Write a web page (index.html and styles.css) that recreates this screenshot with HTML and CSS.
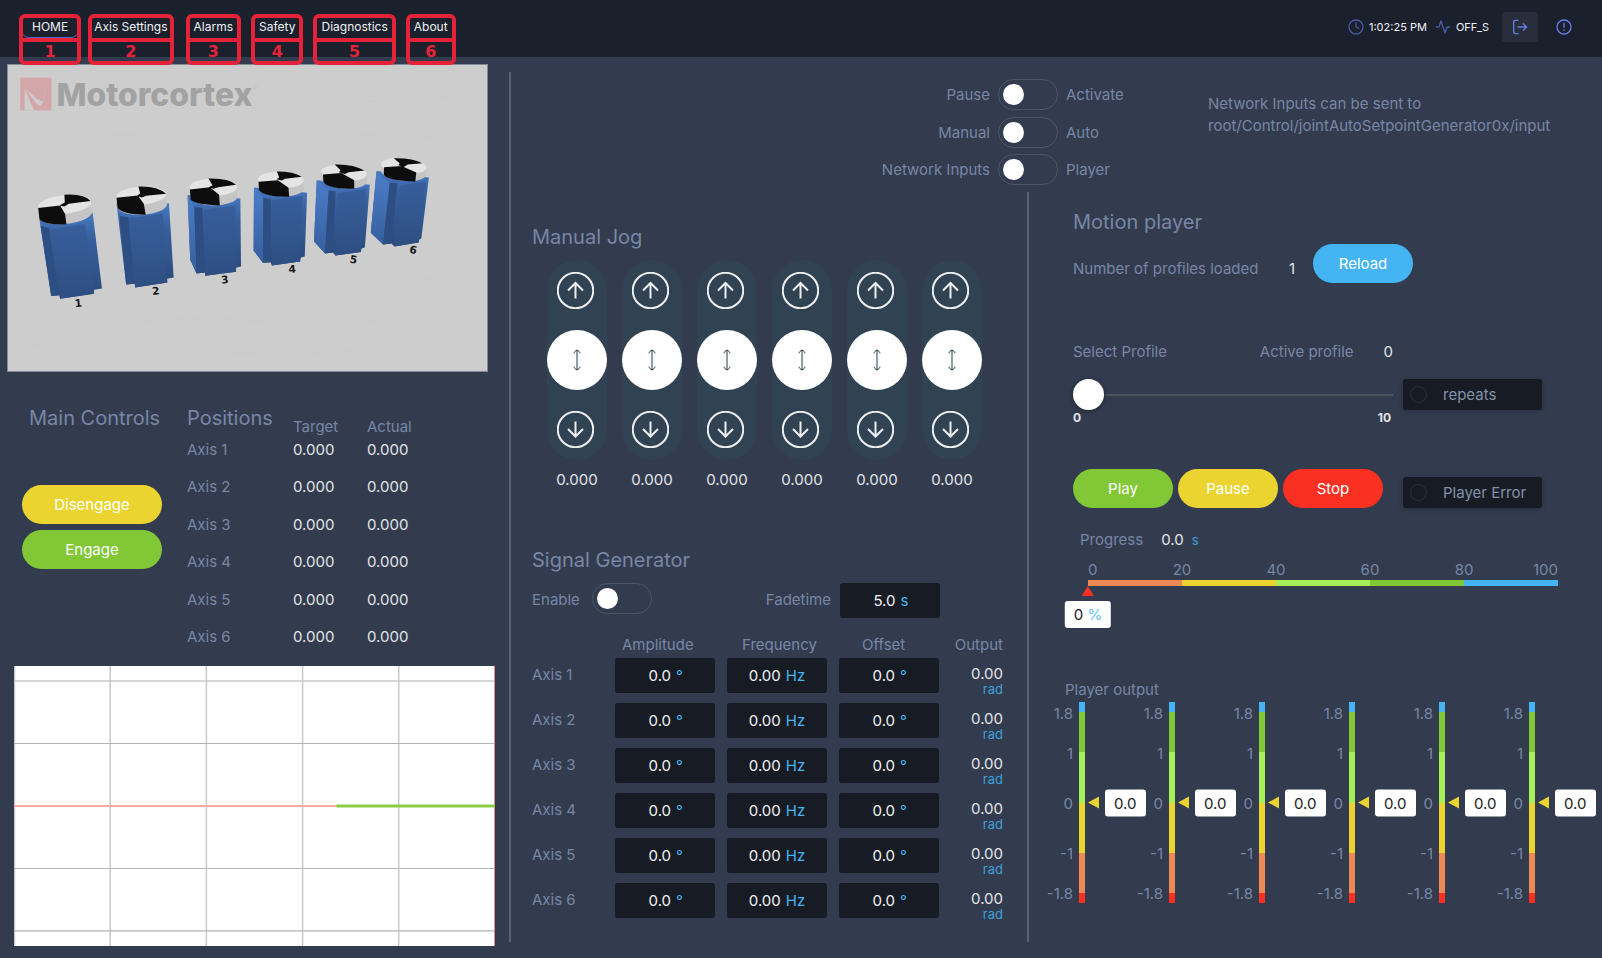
FILE: index.html
```html
<!DOCTYPE html>
<html lang="en">
<head>
<meta charset="utf-8">
<meta name="viewport" content="width=device-width, initial-scale=1">
<title>Motorcortex</title>
<link rel="stylesheet" href="styles.css">
</head>
<body>
<svg class="sprite" aria-hidden="true">
  <symbol id="arrow-up" viewBox="0 0 37 37"><circle cx="18.500" cy="18.500" r="17.700"/><path d="M18.500 26.500V11.500M11 18.500l7.500-7.500 7.500 7.500"/></symbol>
  <symbol id="arrow-down" viewBox="0 0 37 37"><circle cx="18.500" cy="18.500" r="17.700"/><path d="M18.500 10.500v15M11 18l7.500 7.500 7.500-7.500"/></symbol>
  <symbol id="arrow-both" viewBox="0 0 10 24"><path d="M5 2v20M2 5.300c.3-1.600 1.500-2.600 3-3.300 1.500.7 2.700 1.700 3 3.300M2 18.700c.3 1.600 1.500 2.600 3 3.300 1.500-.7 2.700-1.700 3-3.300"/></symbol>
</svg>

<header class="topbar">
  <nav>
    <ul class="tabs">
      <li class="tab tab-active"><a href="#home">HOME</a><span class="callout callout-wide"><b>1</b></span></li>
      <li class="tab"><a href="#axis">Axis Settings</a><span class="callout callout-tight"><b>2</b></span></li>
      <li class="tab"><a href="#alarms">Alarms</a><span class="callout"><b>3</b></span></li>
      <li class="tab"><a href="#safety">Safety</a><span class="callout"><b>4</b></span></li>
      <li class="tab"><a href="#diagnostics">Diagnostics</a><span class="callout"><b>5</b></span></li>
      <li class="tab"><a href="#about">About</a><span class="callout"><b>6</b></span></li>
    </ul>
  </nav>
  <div class="status">
    <svg class="icon icon-dim" viewBox="0 0 24 24"><circle cx="12" cy="12" r="10.500"/><path d="M12 6v6l4 2"/></svg>
    <span class="status-text">1:02:25 PM</span>
    <svg class="icon icon-dim" viewBox="0 0 24 24"><path d="M22 12h-4l-3 9L9 3l-3 9H2"/></svg>
    <span class="status-text">OFF_S</span>
    <button class="icon-button icon-button-filled" aria-label="Log out"><svg class="icon" viewBox="0 0 24 24"><path d="M9 2H5a2.500 2.500 0 0 0-2.500 2.500v15A2.500 2.500 0 0 0 5 22h4M17 17l5-5-5-5M22 12H9"/></svg></button>
    <button class="icon-button" aria-label="Information"><svg class="icon" viewBox="0 0 24 24"><circle cx="12" cy="12" r="10.500"/><path d="M12 6.500v6M12 16.500v.6"/></svg></button>
  </div>
</header>

<main class="layout">
  <section class="left">
    <svg class="scene" viewBox="20 13 1443 922" role="img" aria-label="Six motors">
      <defs>
        <linearGradient id="base" x1="0" y1="0" x2="0" y2="1"><stop offset="0" stop-color="#4679c3"/><stop offset=".3" stop-color="#375f9e"/><stop offset="1" stop-color="#2b4a7b"/></linearGradient>
        <linearGradient id="front" x1="0" y1="0" x2="0" y2="1"><stop offset="0" stop-color="#375f9d"/><stop offset=".5" stop-color="#33578f"/><stop offset="1" stop-color="#2e4e81"/></linearGradient>
        <linearGradient id="lit" x1="0" y1="0" x2="0" y2="1"><stop offset="0" stop-color="#4a7dc8"/><stop offset="1" stop-color="#385f9f"/></linearGradient>
      </defs>
      <rect x="20" y="13" width="1443" height="922" fill="#cdcdcd"/>
      <g fill="none" stroke="#cacaca" stroke-width="2">
        <path d="M60 240q200-20 380-14M900 110q220 30 500-8M300 800q300-40 500-10t600-50M80 860q240-30 420-8M1100 650q160 24 330-6M700 880q300 20 680-50M1000 230q160-16 400 10"/>
      </g>
      <rect x="57" y="51" width="94" height="99" fill="#d3a7aa"/>
      <path fill="#cdcdcd" d="M70 150V86l29 64zM70 82l38 50 10 4 6-7 14-68-14 62-18-8z"/>
      <text class="brand" x="166" y="137">Motorcortex</text>
      <circle cx="767" cy="81" r="4" fill="none" stroke="#b8b8b8"/>

      <path fill="url(#base)" d="M115 480l160-22 28 228-24 4v12l-102 15-2-10-25 2z"/>
      <path fill="#2d4e83" d="M118 497l26 8 30 202-24 2z"/>
      <path fill="url(#front)" d="M144 508l108-16 27 210-102 15z"/>
      <ellipse cx="192" cy="464" rx="80" ry="28" fill="#c5c5c5" transform="rotate(-5 192 464)"/>
      <path fill="#c5c5c5" d="M111 440h159l2 22H115z"/>
      <ellipse cx="191" cy="433" rx="80" ry="28" fill="#e4e4e4" transform="rotate(-5 191 433)"/>
      <path fill="#0d0d0e" d="M111 444l66-8 15 26 4 31q-62 2-81-14zM190 404q60-4 79 19l-66 8-13 8-15-3 16-9z"/>

      <path fill="url(#base)" d="M347 430h158l14 223-20 4 1 11-97 15-1-11-26 2z"/>
      <path fill="#2d4e83" d="M356 468l27 4 19 200-26 2z"/>
      <path fill="url(#front)" d="M383 475l103-15 14 208-97 15z"/>
      <ellipse cx="424" cy="436" rx="75" ry="28" fill="#c5c5c5" transform="rotate(-3 424 436)"/>
      <path fill="#c5c5c5" d="M347 408h150l1 30H350z"/>
      <ellipse cx="422" cy="406" rx="75" ry="27" fill="#e4e4e4" transform="rotate(-3 422 406)"/>
      <path fill="#0d0d0e" d="M347 413l64-7 18 25 6 33q-68 0-85-20zM413 379q58-2 83 22l-60 6-13 5-15-4 10-9z"/>

      <path fill="url(#base)" d="M561 405l159 10 2 205-15 4v12l-93 12-1-10-25 3-19-41z"/>
      <path fill="url(#lit)" d="M561 407l20 33 7 201-19-41z"/>
      <path fill="#2d4e83" d="M581 441l25 3 7 194-25 3z"/>
      <path fill="url(#front)" d="M610 449l95-13 2 200-93 12z"/>
      <ellipse cx="640" cy="409" rx="71" ry="27" fill="#c5c5c5"/>
      <path fill="#c5c5c5" d="M568 382h142v28H570z"/>
      <ellipse cx="639" cy="381" rx="71" ry="26" fill="#e4e4e4"/>
      <path fill="#0d0d0e" d="M568 388l60-7 28 23 2 32q-70-2-88-17zM624 355q60-2 83 19l-54 7-13 5-16-5 12-5z"/>

      <path fill="url(#base)" d="M761 382l160 16-7 192-12 3-2 12-85 12-4-10-23 2-28-37z"/>
      <path fill="url(#lit)" d="M761 382l28 31-1 196-28-37z"/>
      <path fill="#2d4e83" d="M789 413l23 4-1 190-23 2z"/>
      <path fill="url(#front)" d="M814 421l94-14-8 198-85 12z"/>
      <ellipse cx="843" cy="384" rx="68" ry="25" fill="#c5c5c5" transform="rotate(2 843 384)"/>
      <path fill="#c5c5c5" d="M773 358l138 2-1 27-136-4z"/>
      <ellipse cx="842" cy="359" rx="69" ry="25" fill="#e4e4e4" transform="rotate(2 842 359)"/>
      <path fill="#0d0d0e" d="M775 365l58-5 32 23 2 27q-74 0-91-20zM830 334q52 0 75 16l-50 6-11 5-15-4 8-5z"/>

      <path fill="url(#base)" d="M950 360l160 14-15 189-10 3-2 10-77 11-7-9-24 3-33-36z"/>
      <path fill="url(#lit)" d="M950 360l36 31-11 190-33-36z"/>
      <path fill="#2d4e83" d="M986 391l21 3-8 184-24 3z"/>
      <path fill="url(#front)" d="M1014 399l85-13-16 190-77 11z"/>
      <ellipse cx="1032" cy="361" rx="68" ry="24" fill="#c5c5c5" transform="rotate(4 1032 361)"/>
      <path fill="#c5c5c5" d="M963 334l138 8-2 25-134-8z"/>
      <ellipse cx="1032" cy="338" rx="69" ry="24" fill="#e4e4e4" transform="rotate(4 1032 338)"/>
      <path fill="#0d0d0e" d="M969 343l55-5 39 22v26q-78 0-93-20zM1004 313q56-2 90 18l-48 5-11 5-18-5 5-6z"/>

      <path fill="url(#base)" d="M1130 332l158 20-23 184-6 3-2 9-73 12-9-9-25 3-37-36z"/>
      <path fill="url(#lit)" d="M1130 337l40 31-20 186-37-36z"/>
      <path fill="#2d4e83" d="M1170 368l23 1-18 182-25 3z"/>
      <path fill="url(#front)" d="M1200 376l80-12-23 184-73 12z"/>
      <ellipse cx="1212" cy="338" rx="68" ry="24" fill="#c5c5c5" transform="rotate(5 1212 338)"/>
      <path fill="#c5c5c5" d="M1144 312l137 10-3 24-134-14z"/>
      <ellipse cx="1212" cy="317" rx="69" ry="23" fill="#e4e4e4" transform="rotate(5 1212 317)"/>
      <path fill="#0d0d0e" d="M1153 321l52-4 45 20-3 27q-82-2-95-20zM1182 294q54-2 86 15l-44 4-11 7-17-5 4-6z"/>

      <g class="marks">
        <text x="232" y="742" transform="rotate(-6 232 732)">1</text>
        <text x="465" y="705" transform="rotate(-6 465 694)">2</text>
        <text x="673" y="671" transform="rotate(-6 673 660)">3</text>
        <text x="876" y="639" transform="rotate(-4 876 628)">4</text>
        <text x="1061" y="610" transform="rotate(10 1061 599)">5</text>
        <text x="1241" y="581" transform="rotate(14 1241 570)">6</text>
      </g>
    </svg>

    <div class="controls">
      <div class="engage">
        <h2>Main Controls</h2>
        <button class="pill yellow">Disengage</button>
        <button class="pill green">Engage</button>
      </div>
      <table class="positions">
        <thead><tr><th><h2>Positions</h2></th><th>Target</th><th>Actual</th></tr></thead>
        <tbody>
          <tr><th>Axis 1</th><td>0.000</td><td>0.000</td></tr>
          <tr><th>Axis 2</th><td>0.000</td><td>0.000</td></tr>
          <tr><th>Axis 3</th><td>0.000</td><td>0.000</td></tr>
          <tr><th>Axis 4</th><td>0.000</td><td>0.000</td></tr>
          <tr><th>Axis 5</th><td>0.000</td><td>0.000</td></tr>
          <tr><th>Axis 6</th><td>0.000</td><td>0.000</td></tr>
        </tbody>
      </table>
    </div>

    <svg class="plot" viewBox="0 0 481 280" role="img" aria-label="Position plot">
      <rect width="481" height="280" fill="#fff"/>
      <g fill="none" stroke-width="1.500">
        <path stroke="#c9c9c9" d="M.5 0v280M96.200 0v280M192.400 0v280M288.600 0v280M384.700 0v280M0 15h481"/>
        <path stroke="#b4b4b4" stroke-width="1.200" d="M0 77.500h481M0 202.500h481M0 264.800h481"/>
        <path stroke="#ffaaa8" stroke-width="2" d="M0 140h481"/>
        <path stroke="#e58a8c" stroke-width="1" d="M480.500 0v280"/>
        <path stroke="#8bcb45" stroke-width="3" d="M322.500 140H481"/>
      </g>
    </svg>
  </section>

  <div class="divider"></div>

  <section class="right">
    <div class="modes">
      <div class="switches">
        <label for="sw-activate">Pause</label><input id="sw-activate" class="switch" type="checkbox" role="switch"><label for="sw-activate">Activate</label>
        <label for="sw-auto">Manual</label><input id="sw-auto" class="switch" type="checkbox" role="switch"><label for="sw-auto">Auto</label>
        <label for="sw-player">Network Inputs</label><input id="sw-player" class="switch" type="checkbox" role="switch"><label for="sw-player">Player</label>
      </div>
      <p class="note">Network Inputs can be sent to<br>root/Control/jointAutoSetpointGenerator0x/input</p>
    </div>

    <section class="middle">
      <h2>Manual Jog</h2>
      <div class="jogs">
        <div class="jog"><div class="jog-track"><button class="step" aria-label="Jog axis 1 up"><svg><use href="#arrow-up"/></svg></button><button class="knob" aria-label="Axis 1"><svg><use href="#arrow-both"/></svg></button><button class="step" aria-label="Jog axis 1 down"><svg><use href="#arrow-down"/></svg></button></div><output>0.000</output></div>
        <div class="jog"><div class="jog-track"><button class="step" aria-label="Jog axis 2 up"><svg><use href="#arrow-up"/></svg></button><button class="knob" aria-label="Axis 2"><svg><use href="#arrow-both"/></svg></button><button class="step" aria-label="Jog axis 2 down"><svg><use href="#arrow-down"/></svg></button></div><output>0.000</output></div>
        <div class="jog"><div class="jog-track"><button class="step" aria-label="Jog axis 3 up"><svg><use href="#arrow-up"/></svg></button><button class="knob" aria-label="Axis 3"><svg><use href="#arrow-both"/></svg></button><button class="step" aria-label="Jog axis 3 down"><svg><use href="#arrow-down"/></svg></button></div><output>0.000</output></div>
        <div class="jog"><div class="jog-track"><button class="step" aria-label="Jog axis 4 up"><svg><use href="#arrow-up"/></svg></button><button class="knob" aria-label="Axis 4"><svg><use href="#arrow-both"/></svg></button><button class="step" aria-label="Jog axis 4 down"><svg><use href="#arrow-down"/></svg></button></div><output>0.000</output></div>
        <div class="jog"><div class="jog-track"><button class="step" aria-label="Jog axis 5 up"><svg><use href="#arrow-up"/></svg></button><button class="knob" aria-label="Axis 5"><svg><use href="#arrow-both"/></svg></button><button class="step" aria-label="Jog axis 5 down"><svg><use href="#arrow-down"/></svg></button></div><output>0.000</output></div>
        <div class="jog"><div class="jog-track"><button class="step" aria-label="Jog axis 6 up"><svg><use href="#arrow-up"/></svg></button><button class="knob" aria-label="Axis 6"><svg><use href="#arrow-both"/></svg></button><button class="step" aria-label="Jog axis 6 down"><svg><use href="#arrow-down"/></svg></button></div><output>0.000</output></div>
      </div>

      <h2 class="generator-title">Signal Generator</h2>
      <div class="generator-head">
        <label for="sw-enable">Enable</label>
        <input id="sw-enable" class="switch" type="checkbox" role="switch">
        <label class="fade-label" for="fade">Fadetime</label>
        <span class="field"><input id="fade" value="5.0"><i>s</i></span>
      </div>
      <table class="generator">
        <colgroup><col class="c-axis"><col class="c-field"><col class="c-field"><col class="c-field"><col></colgroup>
        <thead><tr><th></th><th class="h-amp">Amplitude</th><th class="h-freq">Frequency</th><th class="h-off">Offset</th><th class="h-out">Output</th></tr></thead>
        <tbody>
          <tr><th>Axis 1</th><td><span class="field"><input aria-label="Axis 1 amplitude" value="0.0"><i>°</i></span></td><td><span class="field wide"><input aria-label="Axis 1 frequency" value="0.00"><i>Hz</i></span></td><td><span class="field"><input aria-label="Axis 1 offset" value="0.0"><i>°</i></span></td><td class="out">0.00<i>rad</i></td></tr>
          <tr><th>Axis 2</th><td><span class="field"><input aria-label="Axis 2 amplitude" value="0.0"><i>°</i></span></td><td><span class="field wide"><input aria-label="Axis 2 frequency" value="0.00"><i>Hz</i></span></td><td><span class="field"><input aria-label="Axis 2 offset" value="0.0"><i>°</i></span></td><td class="out">0.00<i>rad</i></td></tr>
          <tr><th>Axis 3</th><td><span class="field"><input aria-label="Axis 3 amplitude" value="0.0"><i>°</i></span></td><td><span class="field wide"><input aria-label="Axis 3 frequency" value="0.00"><i>Hz</i></span></td><td><span class="field"><input aria-label="Axis 3 offset" value="0.0"><i>°</i></span></td><td class="out">0.00<i>rad</i></td></tr>
          <tr><th>Axis 4</th><td><span class="field"><input aria-label="Axis 4 amplitude" value="0.0"><i>°</i></span></td><td><span class="field wide"><input aria-label="Axis 4 frequency" value="0.00"><i>Hz</i></span></td><td><span class="field"><input aria-label="Axis 4 offset" value="0.0"><i>°</i></span></td><td class="out">0.00<i>rad</i></td></tr>
          <tr><th>Axis 5</th><td><span class="field"><input aria-label="Axis 5 amplitude" value="0.0"><i>°</i></span></td><td><span class="field wide"><input aria-label="Axis 5 frequency" value="0.00"><i>Hz</i></span></td><td><span class="field"><input aria-label="Axis 5 offset" value="0.0"><i>°</i></span></td><td class="out">0.00<i>rad</i></td></tr>
          <tr><th>Axis 6</th><td><span class="field"><input aria-label="Axis 6 amplitude" value="0.0"><i>°</i></span></td><td><span class="field wide"><input aria-label="Axis 6 frequency" value="0.00"><i>Hz</i></span></td><td><span class="field"><input aria-label="Axis 6 offset" value="0.0"><i>°</i></span></td><td class="out">0.00<i>rad</i></td></tr>
        </tbody>
      </table>
    </section>

    <div class="divider divider-inner"></div>

    <section class="player">
      <div class="motion">
        <h2>Motion player</h2>
        <div class="profiles">
          <span class="low">Number of profiles loaded</span><output class="low">1</output>
          <button class="pill blue">Reload</button>
        </div>
        <div class="select-row"><label for="profile">Select Profile</label><span class="active-label">Active profile</span><output>0</output></div>
        <div class="pair">
          <div class="slider">
            <input id="profile" type="range" min="0" max="10" value="0">
            <div class="limits"><b>0</b><b>10</b></div>
          </div>
          <label class="lamp"><input type="radio" name="repeats">repeats</label>
        </div>
        <div class="pair transport">
          <div class="buttons"><button class="pill green">Play</button><button class="pill yellow">Pause</button><button class="pill red">Stop</button></div>
          <label class="lamp"><input type="radio" name="error">Player Error</label>
        </div>
        <div class="progress"><span>Progress</span><output>0.0</output><i>s</i></div>
        <div class="scale">
          <div class="scale-ticks"><span>0</span><span>20</span><span>40</span><span>60</span><span>80</span><span>100</span></div>
          <div class="scale-bar"><span class="s-orange"></span><span class="s-yellow"></span><span class="s-lime"></span><span class="s-green"></span><span class="s-blue"></span></div>
          <div class="pointer" style="left:0%"><span class="pointer-tip"></span><span class="badge">0 <i>%</i></span></div>
        </div>
      </div>

      <div class="outputs">
        <h3>Player output</h3>
        <div class="gauges">
          <div class="gauge"><div class="ticks"><span>1.8</span><span>1</span><span>0</span><span>-1</span><span>-1.8</span></div><div class="bar"></div><div class="marker" style="top:50%"><span class="marker-tip"></span><span class="badge">0.0</span></div></div>
          <div class="gauge"><div class="ticks"><span>1.8</span><span>1</span><span>0</span><span>-1</span><span>-1.8</span></div><div class="bar"></div><div class="marker" style="top:50%"><span class="marker-tip"></span><span class="badge">0.0</span></div></div>
          <div class="gauge"><div class="ticks"><span>1.8</span><span>1</span><span>0</span><span>-1</span><span>-1.8</span></div><div class="bar"></div><div class="marker" style="top:50%"><span class="marker-tip"></span><span class="badge">0.0</span></div></div>
          <div class="gauge"><div class="ticks"><span>1.8</span><span>1</span><span>0</span><span>-1</span><span>-1.8</span></div><div class="bar"></div><div class="marker" style="top:50%"><span class="marker-tip"></span><span class="badge">0.0</span></div></div>
          <div class="gauge"><div class="ticks"><span>1.8</span><span>1</span><span>0</span><span>-1</span><span>-1.8</span></div><div class="bar"></div><div class="marker" style="top:50%"><span class="marker-tip"></span><span class="badge">0.0</span></div></div>
          <div class="gauge"><div class="ticks"><span>1.8</span><span>1</span><span>0</span><span>-1</span><span>-1.8</span></div><div class="bar"></div><div class="marker" style="top:50%"><span class="marker-tip"></span><span class="badge">0.0</span></div></div>
        </div>
      </div>
    </section>
  </section>
</main>
</body>
</html>
```
FILE: styles.css
```css
:root {
  --bg: #323c4e;
  --bar: #1a202c;
  --field: #171c24;
  --label: #7886a6;
  --value: #e2e4e8;
  --line: #56637f;
  --unit: #3f9fd8;
  --red: #f93022;
  --orange: #ee8855;
  --yellow: #ecd430;
  --lime: #a6ef58;
  --green: #82c836;
  --blue: #44b4f2;
}

* { box-sizing: border-box; }

body {
  margin: 0;
  min-height: 100vh;
  display: flex;
  flex-direction: column;
  background: var(--bg);
  color: var(--label);
  font: 400 15px/24px Inter, "Open Sans", sans-serif;
}

button, input { font: inherit; }
button { padding: 0; border: 0; cursor: pointer; }
i { font-style: normal; }
p, h2, h3, ul { margin: 0; padding: 0; }
h2 { font-size: 20px; line-height: 30px; font-weight: 400; }
h3 { font-size: 15px; font-weight: 400; }
th { font-weight: 400; text-align: left; padding: 0; }
td { padding: 0; }
table { border-collapse: collapse; }
output { color: var(--value); }
.sprite { display: none; }

/* Top bar */
.topbar {
  display: flex;
  justify-content: space-between;
  height: 57px;
  padding: 0 20px 0 19px;
  background: var(--bar);
}
.tabs { display: flex; list-style: none; padding-top: 14px; }
.tab { position: relative; padding: 3px; }
.tab a {
  display: block;
  padding: 0 10px;
  color: #f1f2f4;
  font-size: 12px;
  line-height: 20px;
  text-decoration: none;
}
.tab-active a { border-radius: 7px; box-shadow: 0 1px 0 #5566c8; }
.callout {
  position: absolute;
  top: 0;
  left: 5px;
  right: 5px;
  height: 51px;
  padding-top: 20px;
  border: 4px solid #e52238;
  border-radius: 6px;
  pointer-events: none;
}
.callout-wide { left: 0; right: 0; }
.callout-tight { left: 7px; right: 7px; }
.callout b {
  display: block;
  border-top: 4px solid #e52238;
  color: #e52238;
  font: 700 16px/20px "DejaVu Sans", sans-serif;
  text-align: center;
}
.status { display: flex; align-items: center; height: 54px; gap: 5px; }
.status-text { color: #f1f2f4; font-size: 11px; margin-right: 3px; }
.icon {
  width: 16px;
  height: 16px;
  fill: none;
  stroke: #667eea;
  stroke-width: 2;
  stroke-linecap: round;
  stroke-linejoin: round;
}
.icon-dim { stroke: #4a59a3; }
.icon-button { display: grid; place-items: center; width: 36px; height: 30px; border-radius: 3px; background: none; }
.icon-button-filled { background: #282e3c; margin: 0 3px 0 5px; }

/* Page columns */
.layout { flex: 1; display: grid; grid-template-columns: minmax(509px, 509fr) 2px minmax(1070px, 1091fr); }
.divider { margin: 15px 0 16px; background: var(--line); }
.divider-inner { margin-top: 0; }

/* Left column */
.left { padding-top: 7px; }
.scene { display: block; width: calc(100% - 28px); margin-left: 7px; border: 1px solid #858b96; }
.brand { font: 800 96px Inter, sans-serif; fill: #a2a2a2; }
.marks text { font: 700 32px "DejaVu Sans", sans-serif; fill: #17181a; text-anchor: middle; }
.controls { display: flex; gap: 25px; padding: 31px 0 3px 22px; }
.engage { display: flex; flex-direction: column; gap: 6px; width: 140px; }
.engage h2 { padding-left: 7px; margin-bottom: 46px; white-space: nowrap; }
.pill { height: 39px; border-radius: 20px; color: #fff; min-width: 100px; }
.green { background: var(--green); }
.yellow { background: var(--yellow); }
.red { background: var(--red); }
.blue { background: var(--blue); }
.positions { table-layout: fixed; width: 254px; }
.positions thead th { height: 35px; vertical-align: bottom; width: 74px; line-height: 22px; }
.positions thead th:first-child { vertical-align: top; width: 106px; }
.positions tbody tr { height: 37px; }
.positions tbody tr:nth-child(even) { height: 38px; }
.positions tbody th, .positions td { vertical-align: top; }
.positions td { color: var(--value); }
.plot { display: block; width: calc(100% - 28px); margin-left: 14px; }

/* Right area */
.right { display: grid; grid-template-columns: minmax(516px, 516fr) 2px minmax(552px, 573fr); grid-template-rows: auto 1fr; }
.modes { grid-column: 1 / -1; display: grid; grid-template-columns: 697fr 394fr; padding: 22px 0 7px; }
.switches {
  display: grid;
  grid-template-columns: 1fr 60px 142px;
  column-gap: 8px;
  height: 106px;
  align-content: space-between;
  align-items: center;
}
.switches label:nth-child(3n + 1) { text-align: right; }
.switches label { padding-top: 1px; }
.note { line-height: 22px; padding-top: 14px; }
.switch {
  appearance: none;
  display: flex;
  align-items: center;
  width: 60px;
  height: 31px;
  margin: 0;
  padding: 0 4px;
  border: 1px solid #4d5664;
  border-radius: 16px;
  background: none;
}
.switch::before { content: ""; width: 21px; height: 21px; border-radius: 50%; background: #fff; }
.switch:checked { justify-content: flex-end; }

/* Manual jog */
.middle { padding: 30px 0 0 21px; }
.jogs { display: flex; gap: 15px; padding: 8px 0 0 15px; }
.jog { display: flex; flex-direction: column; align-items: center; gap: 8px; }
.jog-track {
  display: flex;
  flex-direction: column;
  align-items: flex-start;
  gap: 21px;
  width: 60px;
  padding: 12px 0;
  border-radius: 30px;
  background: #314252;
}
.step { width: 37px; height: 37px; margin-left: 10px; border-radius: 50%; background: none; }
.step svg { display: block; width: 37px; height: 37px; fill: none; stroke: #eceef0; stroke-width: 2; }
.knob { display: grid; place-items: center; width: 60px; height: 60px; border-radius: 50%; background: #fff; }
.knob svg { width: 10px; height: 24px; fill: none; stroke: #1f3a4a; stroke-width: 1; }

/* Signal generator */
.generator-title { margin-top: 53px; }
.generator-head { display: flex; align-items: flex-start; width: 408px; margin: 8px 0 15px; line-height: 34px; }
.generator-head .switch { margin-left: 12px; }
.generator-head label:first-child { width: 48px; }
.fade-label { margin: 0 9px 0 auto; }
.field {
  display: flex;
  justify-content: center;
  align-items: center;
  gap: 5px;
  width: 100px;
  height: 35px;
  border-radius: 3px;
  background: var(--field);
  color: var(--blue);
  line-height: 24px;
}
.field input { width: 24px; padding: 0; border: 0; background: none; color: #f1f2f4; text-align: right; }
.field.wide input { width: 32px; }
.generator { table-layout: fixed; width: 471px; }
.c-axis { width: 83px; }
.c-field { width: 112px; }
.generator thead th { height: 25px; vertical-align: top; }
.generator .h-amp { padding-left: 7px; }
.generator .h-freq { padding-left: 15px; }
.generator .h-off { padding-left: 23px; }
.generator .h-out { text-align: right; }
.generator tbody tr { height: 45px; }
.generator tbody th, .generator td { vertical-align: top; line-height: 34px; }
.generator .out { padding-top: 7px; color: var(--value); line-height: 17px; text-align: right; }
.out i { display: block; color: var(--unit); font-size: 13px; line-height: 15px; }

/* Motion player */
.motion { padding: 15px 44px 0 44px; }
.profiles { display: flex; align-items: center; width: 340px; margin-top: 7px; }
.profiles .low { padding-top: 10px; }
.profiles output { margin: 0 18px 0 auto; }
.select-row { display: flex; width: 320px; margin-top: 57px; }
.active-label { margin: 0 30px 0 auto; }
.pair { display: grid; grid-template-columns: 320px 139px; gap: 10px; margin-top: 15px; }
.slider input {
  appearance: none;
  display: block;
  width: 100%;
  height: 31px;
  margin: 0;
  background: linear-gradient(#4d535e, #4d535e) center / 100% 2px no-repeat;
}
.slider input::-webkit-slider-thumb {
  appearance: none;
  width: 31px;
  height: 31px;
  border-radius: 50%;
  background: #fff;
  box-shadow: 0 1px 4px #1a202c;
}
.limits { display: flex; justify-content: space-between; padding-right: 2px; color: var(--value); font-size: 12px; line-height: 16px; }
.lamp {
  display: flex;
  align-items: center;
  gap: 16px;
  height: 31px;
  padding-left: 7px;
  border-radius: 3px;
  background: var(--field);
  box-shadow: 0 1px 4px #262e3c;
  color: #8292a8;
}
.lamp input { appearance: none; width: 17px; height: 17px; margin: 0; border: 1px solid #2b313b; border-radius: 50%; }
.transport { margin-top: 43px; align-items: end; }
.buttons { display: flex; gap: 5px; }
.progress { display: flex; margin: 20px 0 8px; padding-left: 7px; }
.progress output { margin: 0 8px 0 18px; }
.progress i { color: var(--unit); font-size: 13px; }
.scale { position: relative; margin-left: 15px; padding-bottom: 42px; }
.scale-ticks { display: grid; grid-template-columns: 1fr 2fr 2fr 2fr 2fr 1fr; line-height: 20px; text-align: center; }
.scale-ticks span:first-child { text-align: left; }
.scale-ticks span:last-child { text-align: right; }
.scale-bar { display: grid; grid-template-columns: repeat(5, 1fr); height: 6px; }
.s-orange { background: var(--orange); }
.s-yellow { background: var(--yellow); }
.s-lime { background: var(--lime); }
.s-green { background: var(--green); }
.s-blue { background: var(--blue); }
.pointer {
  position: absolute;
  bottom: 0;
  display: flex;
  flex-direction: column;
  align-items: center;
  gap: 5px;
  transform: translateX(-50%);
}
.pointer-tip { border: 6px solid transparent; border-top: 0; border-bottom: 10px solid var(--red); }
.badge {
  padding: 0 9px;
  border-radius: 3px;
  background: #fff;
  color: #222;
  line-height: 27px;
  white-space: nowrap;
}
.badge i { color: #5fc3f6; }

/* Player output gauges */
.outputs { padding: 50px 17px 0 16px; }
.outputs h3 { padding-left: 20px; }
.gauges { display: grid; grid-template-columns: repeat(6, 1fr); }
.gauge { position: relative; display: flex; gap: 6px; height: 201px; }
.ticks {
  display: flex;
  flex-direction: column;
  align-items: flex-end;
  width: 28px;
  padding-top: 2px;
  line-height: 20px;
  white-space: nowrap;
}
.ticks span:nth-child(2), .ticks span:nth-child(5) { margin-top: 20px; }
.ticks span:nth-child(3), .ticks span:nth-child(4) { margin-top: 30px; }
.bar {
  width: 6px;
  background: linear-gradient(var(--blue) 5%, var(--green) 5% 25%, var(--lime) 25% 50%, var(--yellow) 50% 75%, var(--orange) 75% 95%, var(--red) 95%);
}
.marker { position: absolute; left: 43px; display: flex; align-items: center; gap: 6px; transform: translateY(-50%); }
.marker-tip { border: 6px solid transparent; border-left: 0; border-right: 11px solid var(--yellow); }
```
